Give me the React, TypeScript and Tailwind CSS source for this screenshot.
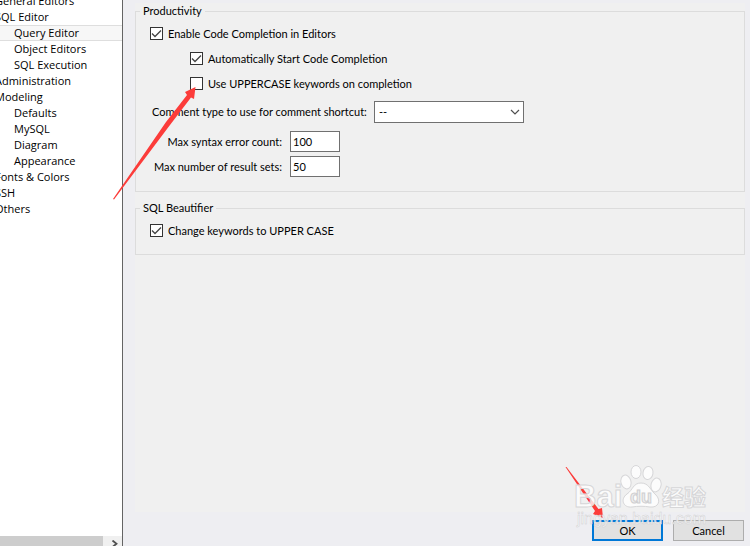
import React from 'react';

interface TreeItem {
  label: string;
  child?: boolean;
  selected?: boolean;
}

const TREE: TreeItem[] = [
  { label: 'General Editors' },
  { label: 'SQL Editor' },
  { label: 'Query Editor', child: true, selected: true },
  { label: 'Object Editors', child: true },
  { label: 'SQL Execution', child: true },
  { label: 'Administration' },
  { label: 'Modeling' },
  { label: 'Defaults', child: true },
  { label: 'MySQL', child: true },
  { label: 'Diagram', child: true },
  { label: 'Appearance', child: true },
  { label: 'Fonts & Colors' },
  { label: 'SSH' },
  { label: 'Others' },
];

interface CheckProps {
  id: string;
  label: string;
  checked?: boolean;
  className?: string;
}

const Check: React.FC<CheckProps> = ({ id, label, checked, className = '' }) => (
  <div className={`flex h-[25px] items-center gap-[5px] ${className}`}>
    <span className="grid h-[13px] w-[13px] shrink-0">
      <input
        id={id}
        type="checkbox"
        defaultChecked={checked}
        className="peer col-start-1 row-start-1 h-[13px] w-[13px] appearance-none border border-[#333333] bg-white"
      />
      <svg viewBox="0 0 13 13" className="pointer-events-none invisible col-start-1 row-start-1 h-[13px] w-[13px] peer-checked:visible">
        <path d="M2 6.5 L5 9.5 L11 3.5" fill="none" stroke="#444" strokeWidth="1.3" />
      </svg>
    </span>
    <label htmlFor={id} className="whitespace-nowrap">{label}</label>
  </div>
);

const Sidebar: React.FC = () => (
  <nav className="flex w-[123px] shrink-0 flex-col overflow-hidden border-r border-[#646464] bg-white text-[11px]">
    {/* Tree is scrolled a little down and to the right */}
    <ul className="-mt-[7px] -ml-[5px] font-['Open_Sans','Noto_Sans',sans-serif]">
      {TREE.map(item => (
        <li
          key={item.label}
          className={`flex h-4 items-center border-y leading-4 whitespace-nowrap ${item.child ? 'pl-[19px]' : ''} ${
            item.selected ? 'border-[#dedede] bg-[#f7f7f7]' : 'border-transparent'
          }`}
        >
          <a href="#" className="cursor-default">{item.label}</a>
        </li>
      ))}
    </ul>

    {/* Horizontal scrollbar */}
    <div className="mt-auto flex h-[10px] bg-[#f0f0f0]">
      <div className="flex-1 bg-[#cdcdcd]" />
      <button aria-label="Scroll right" className="flex w-[19px] justify-center overflow-hidden pl-1">
        <svg viewBox="0 0 8 10" className="mt-1 h-[10px] w-2 shrink-0">
          <path d="M1.5 0.5 L5.5 3.8 L1.5 7" fill="none" stroke="#505050" strokeWidth="1.8" />
        </svg>
      </button>
    </div>
  </nav>
);

const Watermark: React.FC = () => (
  <svg viewBox="0 0 150 70" className="pointer-events-none absolute right-[30px] bottom-[11px] h-[70px] w-[150px]">
    <g fill="#ffffff" fillOpacity="0.8" stroke="#d6d6d8" strokeWidth="1">
      <text x="4" y="42" fontSize="31" fontWeight="700" fontFamily="Liberation Sans, sans-serif">Bai</text>
      <ellipse cx="56" cy="17" rx="5" ry="7" transform="rotate(-15 56 17)" />
      <ellipse cx="66" cy="7" rx="5" ry="6.5" />
      <ellipse cx="78" cy="8" rx="5" ry="6.5" transform="rotate(10 78 8)" />
      <ellipse cx="86" cy="20" rx="5" ry="7" transform="rotate(15 86 20)" />
      <path d="M71 18 C63 18 63 25 57 29 C50 34 53 43 62 42 C68 41 74 41 80 42 C89 43 91 35 86 30 C80 25 79 18 71 18 Z" />
      <text x="92" y="40" fontSize="22" fontWeight="700" fontFamily="Noto Sans CJK SC, sans-serif">经验</text>
    </g>
    <text x="60" y="38" fontSize="18" fontWeight="700" fontFamily="Liberation Sans, sans-serif" fill="#eeeeee" stroke="#cfcfd1" strokeWidth="1">du</text>
    <text x="7" y="59" fontSize="16" fontFamily="Liberation Sans, sans-serif" fill="#ffffff" fillOpacity="0.8" stroke="#d0d0d2" strokeWidth="0.5">jingyan.baidu.com</text>
  </svg>
);

export default function App() {
  return (
    <div className="relative flex h-screen overflow-hidden bg-[#eeeef2] font-[Lato,Roboto,sans-serif] text-[11px] leading-4 text-black">
      <Sidebar />

      <main className="flex min-w-0 flex-1 flex-col pt-[3px] pr-[5px] pb-[5px] pl-3">
        <form className="flex flex-1 flex-col gap-2 bg-[#f0f0f0]">
          <fieldset className="border border-[#dcdcdc] pt-[2px] pb-3 pl-[14px]">
            <legend className="-ml-[10px] px-[3px]">Productivity</legend>
            <Check id="completion" label="Enable Code Completion in Editors" checked />
            <Check id="autostart" label="Automatically Start Code Completion" checked className="pl-10" />
            <Check id="uppercase" label="Use UPPERCASE keywords on completion" className="pl-10" />

            <div className="mb-px flex h-8 items-center">
              <label htmlFor="comment" className="w-[224px] shrink-0 pl-[2px] whitespace-nowrap">
                Comment type to use for comment shortcut:
              </label>
              <span className="grid h-[22px] w-[150px]">
                <select id="comment" className="col-start-1 row-start-1 appearance-none border border-[#707070] bg-white pl-1">
                  <option>--</option>
                  <option>#</option>
                </select>
                <svg viewBox="0 0 10 6" className="pointer-events-none col-start-1 row-start-1 mr-1 h-[6px] w-[10px] self-center justify-self-end">
                  <path d="M1 1 L5 5 L9 1" fill="none" stroke="#505050" strokeWidth="1.2" />
                </svg>
              </span>
            </div>

            <div className="flex h-[25px] items-center gap-2">
              <label htmlFor="errors" className="w-[132px] text-right whitespace-nowrap">Max syntax error count:</label>
              <input id="errors" type="text" defaultValue="100" className="h-[21px] w-[50px] border border-[#707070] bg-white px-[2px]" />
            </div>
            <div className="flex h-[25px] items-center gap-2">
              <label htmlFor="results" className="w-[132px] text-right whitespace-nowrap">Max number of result sets:</label>
              <input id="results" type="text" defaultValue="50" className="h-[21px] w-[50px] border border-[#707070] bg-white px-[2px]" />
            </div>
          </fieldset>

          <fieldset className="border border-[#dcdcdc] pt-[2px] pb-[11px] pl-[14px]">
            <legend className="-ml-[10px] px-[3px]">SQL Beautifier</legend>
            <Check id="beautify" label="Change keywords to UPPER CASE" checked />
          </fieldset>
        </form>

        <footer className="flex justify-end gap-[10px] pt-2 pr-px">
          <button className="h-[21px] w-[71px] border-2 border-[#0078d7] bg-[#e1e1e1] leading-4">OK</button>
          <button className="h-[21px] w-[71px] border border-[#adadad] bg-[#e1e1e1] leading-4">Cancel</button>
        </footer>
      </main>

      {/* Arrow to the uppercase option */}
      <svg viewBox="0 0 90 120" className="pointer-events-none absolute top-[83px] left-[110px] h-[120px] w-[90px]">
        <path d="M3 116 L56 39 L77 12 L75 9 L85.5 4 L84 16 L81 14.5 L60 42 L4 116.5 Z" fill="#fc3c3a" />
      </svg>
      {/* Arrow to the OK button */}
      <svg viewBox="0 0 42 54" className="pointer-events-none absolute right-[144px] bottom-[26px] h-[54px] w-[42px]">
        <path d="M1.5 1 L31 45 L29 48 L39 52 L38 42 L34.5 43 L2.5 1 Z" fill="#fc3c3a" />
      </svg>
      <Watermark />
    </div>
  );
}
